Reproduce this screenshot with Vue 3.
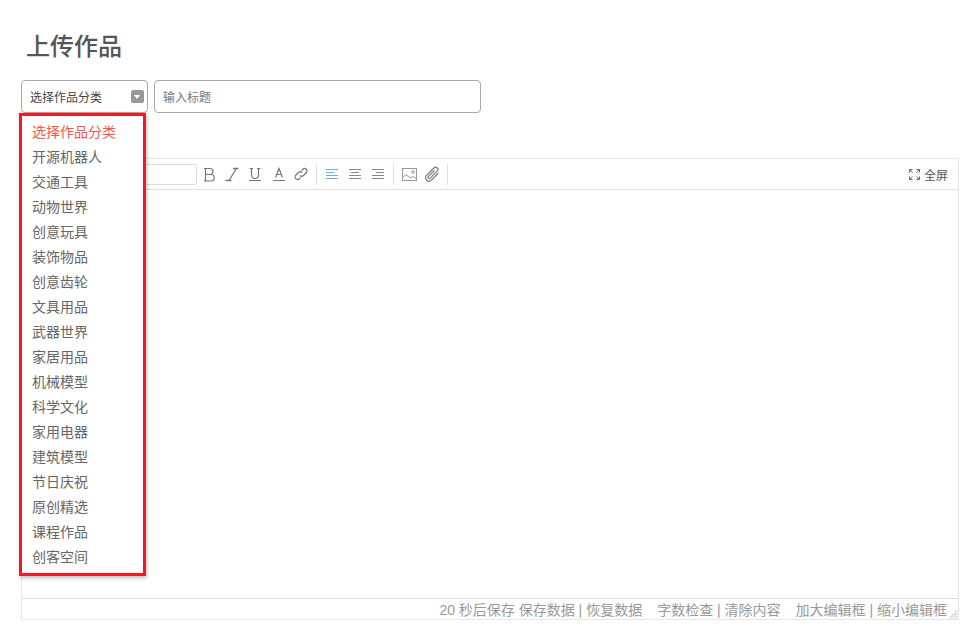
<script setup>
const items = ['选择作品分类','开源机器人','交通工具','动物世界','创意玩具','装饰物品','创意齿轮','文具用品','武器世界','家居用品','机械模型','科学文化','家用电器','建筑模型','节日庆祝','原创精选','课程作品','创客空间']
</script>

<template>
  <div class="page">
    <h1 class="title">上传作品</h1>
    <div class="row">
      <div class="select">
        <span>选择作品分类</span>
        <i class="arrow"></i>
        <ul class="menu">
          <li v-for="(it, i) in items" :key="it" :class="{ active: i === 0 }">{{ it }}</li>
        </ul>
      </div>
      <input class="title-input" placeholder="输入标题" />
    </div>
    <div class="editor">
      <div class="toolbar">
        <div class="font-box"></div>
        <svg class="ic" viewBox="0 0 16 16"><path d="M3 2.500h6a3 3 0 0 1 0 6H4.500M4.500 8.500h5.500a3.200 3.200 0 0 1 0 6.500H3M4.500 2.500v12.500" fill="none" stroke="#777" stroke-width="1.200"/></svg>
        <svg class="ic" viewBox="0 0 16 16"><path d="M12.500 2.500 5 14.500M9 2.500h5.500M1.500 14.500h6" fill="none" stroke="#777" stroke-width="1.300"/></svg>
        <svg class="ic" viewBox="0 0 16 16"><path d="M2.500 2.500h3.500M10 2.500h3.500M4.500 2.500v6.500a3.500 3.500 0 0 0 7 0V2.500M2 14.500h12" fill="none" stroke="#777" stroke-width="1.200"/></svg>
        <svg class="ic" viewBox="0 0 16 16"><path d="M5.500 11.500 9 2.500l3.500 9M6.800 8.500h4.400M3 14.500h12" fill="none" stroke="#777" stroke-width="1.200"/></svg>
        <svg class="ic" viewBox="0 0 16 16"><g fill="none" stroke="#777" stroke-width="1.200"><path d="M7 9.500a2.500 2.500 0 0 0 3.500 0l3-3a2.500 2.500 0 0 0-3.500-3.500L8.500 4.500"/><path d="M9 6.500a2.500 2.500 0 0 0-3.500 0l-3 3A2.500 2.500 0 0 0 6 13l1.500-1.500"/></g></svg>
        <b class="sep"></b>
        <svg class="ic" viewBox="0 0 16 16"><path d="M2 3.500h12M2 6.500h8M2 9.500h12M2 12.500h12" fill="none" stroke="#6aaee0" stroke-width="1"/></svg>
        <svg class="ic" viewBox="0 0 16 16"><path d="M2 3.500h12M4 6.500h8M2 9.500h12M2 12.500h12" fill="none" stroke="#888" stroke-width="1"/></svg>
        <svg class="ic" viewBox="0 0 16 16"><path d="M2 3.500h12M6 6.500h8M2 9.500h12M2 12.500h12" fill="none" stroke="#888" stroke-width="1"/></svg>
        <b class="sep"></b>
        <svg class="ic" viewBox="0 0 16 16"><g fill="none" stroke="#999" stroke-width="1"><rect x="1.500" y="2.500" width="14" height="12"/><path d="M1.500 11.500 5 8.500l4 3.500 2.500-1.500 4 2"/><circle cx="12" cy="6" r="1.300"/></g></svg>
        <svg class="ic" viewBox="0 0 16 16"><path d="M14.500 7 7.500 14a3.200 3.200 0 0 1-5-4.500L10 2a2.200 2.200 0 0 1 3.200 3.200L6 12.300a1.100 1.100 0 0 1-1.700-1.600L10.500 4.500" fill="none" stroke="#777" stroke-width="1.100"/></svg>
        <b class="sep"></b>
        <div class="full">
          <svg class="ic-full" viewBox="0 0 11 11"><path d="M.5 3.500v-3h3M7.500 .5h3v3M10.500 7.500v3h-3M3.500 10.500h-3v-3M1 1l2.500 2.500M10 1 7.500 3.500M10 10 7.500 7.500M1 10l2.500-2.500" fill="none" stroke="#666" stroke-width="1"/></svg>
          <span>全屏</span>
        </div>
      </div>
      <div class="body"></div>
      <div class="footer">
        <span>20 秒后保存 保存数据 | 恢复数据</span>
        <span class="gap">字数检查 | 清除内容</span>
        <span class="gap">加大编辑框 | 缩小编辑框</span>
        <svg class="grip" viewBox="0 0 10 10"><path d="M9.500 1 1 9.500M9.500 4 4 9.500M9.500 7 7 9.500" fill="none" stroke="#bbb" stroke-width="1"/></svg>
      </div>
    </div>
  </div>
</template>

<style>
html, body { margin: 0; background: #fff; }
</style>

<style scoped>
.page {
  width: 979px;
  height: 632px;
  box-sizing: border-box;
  padding: 0 20px 0 21px;
  overflow: hidden;
  font-family: "Liberation Sans", "Noto Sans CJK SC", sans-serif;
  color: #555;
}
.title {
  margin: 0;
  padding: 30px 0 0 5px;
  height: 50px;
  font-family: "Noto Sans CJK SC", sans-serif;
  font-size: 24px;
  line-height: 30px;
  font-weight: 500;
  color: #555;
}
.row { display: flex; gap: 6px; }
.select {
  position: relative;
  box-sizing: border-box;
  width: 127px;
  height: 33px;
  border: 1px solid #aaa;
  border-radius: 4px;
  padding-left: 8px;
  display: flex;
  align-items: center;
  justify-content: space-between;
  font-size: 12px;
  color: #444;
}
.arrow {
  display: block;
  width: 13px;
  height: 13px;
  margin-right: 3px;
  border-radius: 2px;
  background: #999;
  position: relative;
}
.arrow::after {
  content: "";
  position: absolute;
  left: 3px;
  top: 5px;
  border-left: 3.500px solid transparent;
  border-right: 3.500px solid transparent;
  border-top: 4px solid #fff;
}
.menu {
  position: absolute;
  z-index: 2;
  left: -3px;
  top: 32px;
  box-sizing: border-box;
  width: 127px;
  height: 463px;
  margin: 0;
  padding: 4px 0 0 10px;
  list-style: none;
  background: #fff;
  border: 3px solid #ed1c24;
  box-shadow: 1px 2px 4px rgba(0, 0, 0, .25);
  font-size: 14px;
  color: #666;
}
.menu li { height: 25px; line-height: 25px; }
.menu .active { color: #f4584c; }
.title-input {
  box-sizing: border-box;
  width: 327px;
  height: 33px;
  border: 1px solid #aaa;
  border-radius: 4px;
  padding: 0 8px;
  font: 12px "Noto Sans CJK SC", sans-serif;
  outline: none;
}
.title-input::placeholder { color: #777; opacity: 1; }
.editor {
  box-sizing: border-box;
  width: 938px;
  height: 462px;
  margin-top: 45px;
  border: 1px solid #e6e6e6;
  display: flex;
  flex-direction: column;
}
.toolbar {
  box-sizing: border-box;
  height: 31px;
  border-bottom: 1px solid #e0e0e0;
  display: flex;
  align-items: center;
  padding-left: 100px;
}
.font-box {
  width: 75px;
  height: 21px;
  box-sizing: border-box;
  border: 1px solid #ddd;
  border-radius: 0 3px 3px 0;
  border-left: 0;
  margin-right: 4px;
}
.ic { width: 16px; height: 16px; flex: none; margin-right: 7px; }
.sep { display: block; width: 1px; height: 21px; background: #e0e0e0; margin-right: 7px; }
.full {
  margin-left: auto;
  margin-right: 10px;
  display: flex;
  align-items: center;
  gap: 4px;
  font-size: 12px;
  font-family: "Noto Sans CJK SC", sans-serif;
  color: #555;
}
.ic-full { width: 11px; height: 11px; }
.body { flex: 1; }
.footer {
  position: relative;
  box-sizing: border-box;
  height: 21px;
  border-top: 1px solid #ddd;
  display: flex;
  justify-content: flex-end;
  align-items: center;
  padding-right: 11px;
  font-size: 14px;
  color: #999;
}
.gap { margin-left: 15px; }
.grip { position: absolute; right: 0; bottom: 0; width: 10px; height: 10px; }
</style>
